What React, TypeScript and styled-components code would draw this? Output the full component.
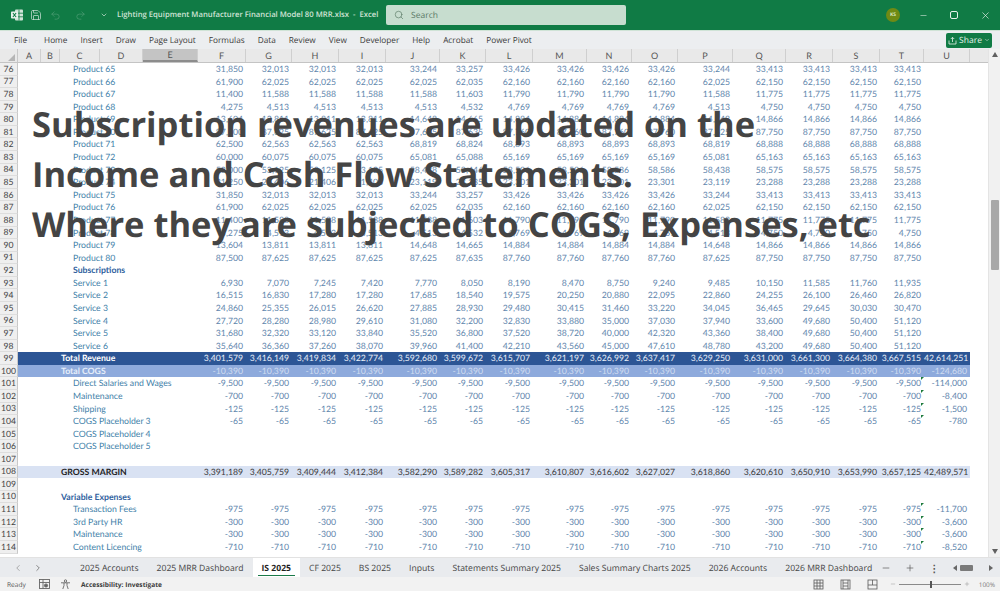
import styled, { createGlobalStyle } from 'styled-components';
import {
  ChevronDown,
  ChevronLeft,
  ChevronRight,
  Minus,
  Plus,
  Redo2,
  Save,
  Search,
  Undo2,
  X,
} from 'lucide-react';

const GlobalStyle = createGlobalStyle`
  html, body {
    margin: 0;
    padding: 0;
    width: 1000px;
    height: 591px;
    overflow: hidden;
    background: #ffffff;
    font-family: "Open Sans", "Liberation Sans", sans-serif;
    text-rendering: geometricPrecision;
  }
`;

const Page = styled.div`
  position: relative;
  display: flex;
  flex-direction: column;
  width: 1000px;
  height: 591px;
  overflow: hidden;
`;

const TitleBar = styled.header`
  display: flex;
  align-items: center;
  height: 30px;
  flex: none;
  padding-left: 10px;
  background: #107b45;
  color: #dfeee5;
`;

const QuickIcon = styled.span<{ $w: number; $faded?: boolean }>`
  display: flex;
  align-items: center;
  flex: none;
  width: ${({ $w }) => $w}px;
  opacity: ${({ $faded }) => ($faded ? 0.3 : 0.95)};
`;

const DocTitle = styled.div`
  width: 269px;
  flex: none;
  font-size: 7.7px;
  font-weight: 600;
  white-space: nowrap;
  color: #cfe3d6;
`;

const SearchBox = styled.div`
  display: flex;
  align-items: center;
  gap: 7px;
  width: 240px;
  height: 20px;
  flex: none;
  padding-left: 8px;
  box-sizing: border-box;
  border-radius: 2px;
  background: #c7ddcf;
  color: #5b7a67;
  font-size: 8.5px;
`;

const WindowControls = styled.div`
  display: flex;
  align-items: center;
  margin-left: auto;
  padding-right: 9.5px;
  gap: 22px;
`;

const Avatar = styled.div`
  display: flex;
  align-items: center;
  justify-content: center;
  width: 14px;
  height: 14px;
  margin-right: -3.5px;
  border-radius: 50%;
  background: #6f8a14;
  color: #d9e6c0;
  font-size: 5px;
  font-weight: 700;
`;

const RestoreIcon = styled.span`
  display: block;
  width: 6px;
  height: 6px;
  border: 1.2px solid #e6f1ea;
  border-radius: 2px;
`;

const MenuBar = styled.nav`
  display: flex;
  align-items: center;
  height: 19px;
  flex: none;
  padding-left: 14px;
  box-sizing: border-box;
  background: #eceef0;
  border-top: 1px solid #cfe3d6;
`;

const MenuItem = styled.span`
  margin-right: 13px;
  font-size: 8.25px;
  color: #3c3c3c;
  white-space: nowrap;
  &:first-child {
    margin-right: 17px;
  }
`;

const ShareButton = styled.div`
  display: flex;
  align-items: center;
  justify-content: center;
  gap: 2px;
  width: 46px;
  height: 15px;
  margin-left: auto;
  margin-right: 8px;
  border-radius: 2px;
  background: #107b45;
  color: #e6f2ea;
  font-size: 8.5px;
`;

const Workspace = styled.div`
  position: relative;
  display: flex;
  flex: 1;
  min-height: 0;
`;

const Sheet = styled.div`
  width: 988px;
  flex: none;
  overflow: hidden;
`;

const HeaderRow = styled.div`
  display: flex;
  height: 14px;
  background: #e9e9e9;
  border-bottom: 1px solid #c4c4c4;
  box-sizing: border-box;
`;

const HeaderCorner = styled.div`
  position: relative;
  width: 18px;
  flex: none;
  border-right: 1px solid #c8c8c8;
  box-sizing: border-box;
  &::after {
    content: '';
    position: absolute;
    right: 2px;
    bottom: 1px;
    border-style: solid;
    border-width: 0 0 7px 7px;
    border-color: transparent transparent #b5b5b5 transparent;
  }
`;

const HeaderCell = styled.div<{ $w: number; $active?: boolean }>`
  display: flex;
  align-items: center;
  justify-content: center;
  width: ${({ $w }) => $w}px;
  flex: none;
  box-sizing: border-box;
  border-right: 1px solid #cfcfcf;
  font-family: Lato, "Open Sans", sans-serif;
  font-size: 9px;
  color: #555555;
  background: ${({ $active }) => ($active ? '#c4c4c4' : 'transparent')};
  border-bottom: ${({ $active }) => ($active ? '2px solid #8c8c8c' : '0')};
`;

const Row = styled.div`
  display: flex;
  height: 12.59px;
`;

const RowNumber = styled.div`
  display: flex;
  align-items: center;
  justify-content: center;
  width: 18px;
  flex: none;
  box-sizing: border-box;
  background: #efefef;
  border-right: 1px solid #c8c8c8;
  border-bottom: 1px solid #dddddd;
  font-family: Lato, "Open Sans", sans-serif;
  font-size: 8.6px;
  color: #444444;
`;

type Variant = 'plain' | 'revenue' | 'cogs' | 'margin';

const bandBackground: Record<Variant, string> = {
  plain: 'transparent',
  revenue: '#2c5595',
  cogs: '#8eaadc',
  margin: '#d9e2f3',
};

const labelColor: Record<Variant, string> = {
  plain: '#3f7fa9',
  revenue: '#ffffff',
  cogs: '#e6eefa',
  margin: '#1f1f1f',
};

const valueColor: Record<Variant, string> = {
  plain: '#5f86ad',
  revenue: '#e8eef8',
  cogs: '#d0dcf0',
  margin: '#3a3a3a',
};

const RowBody = styled.div<{ $variant: Variant }>`
  display: grid;
  grid-template-columns: 180px 48px 46px 47px 47px 54px 46px 47px 54px 45px 46px 55px 53px 47px 47px 44px 46px;
  width: 952px;
  background: ${({ $variant }) => bandBackground[$variant]};
  font-family: Lato, "Open Sans", sans-serif;
  font-size: 8.7px;
  line-height: 12.59px;
`;

const Label = styled.div<{ $indent: number; $tone?: 'strong'; $variant: Variant }>`
  padding-left: ${({ $indent }) => $indent}px;
  white-space: nowrap;
  color: ${({ $tone, $variant }) => ($tone === 'strong' ? '#2f5f9e' : labelColor[$variant])};
  font-weight: ${({ $tone, $variant }) => ($tone === 'strong' || $variant !== 'plain' ? 700 : 400)};
`;

const Value = styled.div<{ $flag?: boolean; $variant: Variant }>`
  position: relative;
  padding-right: 3px;
  text-align: right;
  white-space: nowrap;
  color: ${({ $variant }) => valueColor[$variant]};
  &::after {
    content: '';
    display: ${({ $flag }) => ($flag ? 'block' : 'none')};
    position: absolute;
    top: 0;
    right: 0;
    border-style: solid;
    border-width: 3px 3px 0 0;
    border-color: #1d7a3c transparent transparent transparent;
  }
`;

const Overlay = styled.div`
  position: absolute;
  top: 51px;
  left: 32px;
  font-size: 34.5px;
  font-weight: 700;
  line-height: 50px;
  color: #444444;
  white-space: nowrap;
  pointer-events: none;
`;

const ScrollTrack = styled.div`
  position: relative;
  flex: 1;
  background: #f1f1f1;
  border-left: 1px solid #e4e4e4;
`;

const ScrollArrow = styled.div<{ $down?: boolean }>`
  position: absolute;
  left: 3px;
  ${({ $down }) => ($down ? 'bottom: 3px;' : 'top: 3px;')}
  border-style: solid;
  border-width: ${({ $down }) => ($down ? '5px 3px 0 3px' : '0 3px 5px 3px')};
  border-color: ${({ $down }) =>
    $down ? '#606060 transparent transparent transparent' : 'transparent transparent #606060 transparent'};
`;

const ScrollThumb = styled.div`
  position: absolute;
  top: 151px;
  left: 2px;
  width: 8px;
  height: 70px;
  border-radius: 1px;
  background: #a8a8a8;
`;

const TabBar = styled.div`
  display: flex;
  align-items: center;
  height: 20px;
  flex: none;
  background: #e9ebee;
  color: #454545;
  border-top: 1px solid #e2e2e2;
  box-sizing: border-box;
`;

const TabNav = styled.div`
  display: flex;
  align-items: center;
  flex: none;
  gap: 10px;
  width: 71px;
  padding-left: 13px;
  box-sizing: border-box;
  color: #888888;
`;

const Tab = styled.div<{ $active?: boolean }>`
  position: relative;
  display: flex;
  align-items: center;
  flex: none;
  height: 100%;
  padding: 0 9px;
  font-size: 8.62px;
  white-space: nowrap;
  background: ${({ $active }) => ($active ? '#ffffff' : 'transparent')};
  font-weight: ${({ $active }) => ($active ? 700 : 400)};
  color: ${({ $active }) => ($active ? '#1f1f1f' : '#454545')};
  &::after {
    content: '';
    display: ${({ $active }) => ($active ? 'block' : 'none')};
    position: absolute;
    left: 5px;
    right: 5px;
    bottom: 1px;
    height: 1.5px;
    background: #1a7a48;
  }
`;

const TabTools = styled.div`
  display: flex;
  align-items: center;
  margin-left: auto;
  padding-right: 13px;
  color: #555555;
  gap: 14px;
`;

const TabDots = styled.span`
  font-size: 10px;
  font-weight: 700;
`;

const HScroll = styled.div`
  display: flex;
  align-items: center;
  gap: 3px;
`;

const TriLeft = styled.span`
  border-style: solid;
  border-width: 3px 4px 3px 0;
  border-color: transparent #666666 transparent transparent;
`;

const TriRight = styled.span`
  margin-left: 13px;
  border-style: solid;
  border-width: 3px 0 3px 4px;
  border-color: transparent transparent transparent #666666;
`;

const HThumb = styled.span`
  width: 13px;
  height: 6px;
  border-radius: 1px;
  background: #7a7a7a;
`;

const StatusBar = styled.footer`
  display: flex;
  align-items: center;
  height: 14px;
  flex: none;
  padding-left: 7px;
  background: #f2f2f2;
  color: #555555;
  font-size: 6.6px;
`;

const Ready = styled.span`
  width: 32px;
`;

const StatusIcon = styled.span`
  display: flex;
  width: 21px;
`;

const Accessibility = styled.span`
  font-weight: 700;
  color: #3c3c3c;
  white-space: nowrap;
`;

const ViewGroup = styled.div`
  display: flex;
  align-items: center;
  margin-left: auto;
  gap: 16px;
  padding-right: 12px;
`;

const ZoomSlider = styled.div`
  position: relative;
  width: 62px;
  height: 1px;
  margin: 0 3px;
  background: #8a8a8a;
  &::after {
    content: '';
    position: absolute;
    top: -3px;
    left: 31px;
    width: 2px;
    height: 7px;
    background: #555555;
  }
`;

const ZoomGroup = styled.div`
  display: flex;
  align-items: center;
  color: #777777;
  padding-right: 5px;
`;

const ZoomLabel = styled.span`
  margin-left: 9px;
  font-size: 6.4px;
`;

const columns = [
  ['A', 23], ['B', 19], ['C', 40], ['D', 43], ['E', 55], ['F', 48], ['G', 46], ['H', 47], ['I', 47],
  ['J', 54], ['K', 46], ['L', 47], ['M', 54], ['N', 45], ['O', 46], ['P', 55], ['Q', 53], ['R', 47],
  ['S', 47], ['T', 44], ['U', 46],
] as const;

const menuItems = ['File', 'Home', 'Insert', 'Draw', 'Page Layout', 'Formulas', 'Data', 'Review', 'View', 'Developer', 'Help', 'Acrobat', 'Power Pivot'];
const tabs = ['2025 Accounts', '2025 MRR Dashboard', 'IS 2025', 'CF 2025', 'BS 2025', 'Inputs', 'Statements Summary 2025', 'Sales Summary Charts 2025', '2026 Accounts', '2026 MRR Dashboard'];

type RowData = {
  label?: string;
  indent?: number;
  tone?: 'strong';
  variant?: Variant;
  values?: string;
  flag?: boolean;
};

const repeat = (v: string, total: string) => `${Array(15).fill(v).join(' ')} ${total}`;

const p65 = '31,850 32,013 32,013 32,013 33,244 33,257 33,426 33,426 33,426 33,426 33,244 33,413 33,413 33,413 33,413';
const p66 = '61,900 62,025 62,025 62,025 62,025 62,035 62,160 62,160 62,160 62,160 62,025 62,150 62,150 62,150 62,150';
const p67 = '11,400 11,588 11,588 11,588 11,588 11,603 11,790 11,790 11,790 11,790 11,588 11,775 11,775 11,775 11,775';
const p68 = '4,275 4,513 4,513 4,513 4,513 4,532 4,769 4,769 4,769 4,769 4,513 4,750 4,750 4,750 4,750';
const p69 = '13,604 13,811 13,811 13,811 14,648 14,665 14,884 14,884 14,884 14,884 14,648 14,866 14,866 14,866 14,866';
const p70 = '87,500 87,625 87,625 87,625 87,625 87,635 87,760 87,760 87,760 87,760 87,625 87,750 87,750 87,750 87,750';

const rows: RowData[] = [
  { label: 'Product 65', indent: 55, values: p65 },
  { label: 'Product 66', indent: 55, values: p66 },
  { label: 'Product 67', indent: 55, values: p67 },
  { label: 'Product 68', indent: 55, values: p68 },
  { label: 'Product 69', indent: 55, values: p69 },
  { label: 'Product 70', indent: 55, values: p70 },
  { label: 'Product 71', indent: 55, values: '62,500 62,563 62,563 62,563 68,819 68,824 68,893 68,893 68,893 68,893 68,819 68,888 68,888 68,888 68,888' },
  { label: 'Product 72', indent: 55, values: '60,000 60,075 60,075 60,075 65,081 65,088 65,169 65,169 65,169 65,169 65,081 65,163 65,163 65,163 65,163' },
  { label: 'Product 73', indent: 55, values: '53,000 53,125 53,125 53,125 58,438 58,446 58,586 58,586 58,586 58,586 58,438 58,575 58,575 58,575 58,575' },
  { label: 'Product 74', indent: 55, values: '21,250 21,406 21,406 21,406 23,119 23,135 23,301 23,301 23,301 23,301 23,119 23,288 23,288 23,288 23,288' },
  { label: 'Product 75', indent: 55, values: p65 },
  { label: 'Product 76', indent: 55, values: p66 },
  { label: 'Product 77', indent: 55, values: p67 },
  { label: 'Product 78', indent: 55, values: p68 },
  { label: 'Product 79', indent: 55, values: p69 },
  { label: 'Product 80', indent: 55, values: p70 },
  { label: 'Subscriptions', indent: 55, tone: 'strong' },
  { label: 'Service 1', indent: 55, values: '6,930 7,070 7,245 7,420 7,770 8,050 8,190 8,470 8,750 9,240 9,485 10,150 11,585 11,760 11,935' },
  { label: 'Service 2', indent: 55, values: '16,515 16,830 17,280 17,280 17,685 18,540 19,575 20,250 20,880 22,095 22,860 24,255 26,100 26,460 26,820' },
  { label: 'Service 3', indent: 55, values: '24,860 25,355 26,015 26,620 27,885 28,930 29,480 30,415 31,460 33,220 34,045 36,465 29,645 30,030 30,470' },
  { label: 'Service 4', indent: 55, values: '27,720 28,280 28,980 29,610 31,080 32,200 32,830 33,880 35,000 37,030 37,940 33,600 49,680 50,400 51,120' },
  { label: 'Service 5', indent: 55, values: '31,680 32,320 33,120 33,840 35,520 36,800 37,520 38,720 40,000 42,320 43,360 38,400 49,680 50,400 51,120' },
  { label: 'Service 6', indent: 55, values: '35,640 36,360 37,260 38,070 39,960 41,400 42,210 43,560 45,000 47,610 48,780 43,200 49,680 50,400 51,120' },
  { label: 'Total Revenue', indent: 43, variant: 'revenue', values: '3,401,579 3,416,149 3,419,834 3,422,774 3,592,680 3,599,672 3,615,707 3,621,197 3,626,992 3,637,417 3,629,250 3,631,000 3,661,300 3,664,380 3,667,515 42,614,251' },
  { label: 'Total COGS', indent: 43, variant: 'cogs', values: repeat('-10,390', '-124,680') },
  { label: 'Direct Salaries and Wages', indent: 55, values: repeat('-9,500', '-114,000'), flag: true },
  { label: 'Maintenance', indent: 55, values: repeat('-700', '-8,400'), flag: true },
  { label: 'Shipping', indent: 55, values: repeat('-125', '-1,500'), flag: true },
  { label: 'COGS Placeholder 3', indent: 55, values: repeat('-65', '-780'), flag: true },
  { label: 'COGS Placeholder 4', indent: 55 },
  { label: 'COGS Placeholder 5', indent: 55 },
  {},
  { label: 'GROSS MARGIN', indent: 43, variant: 'margin', values: '3,391,189 3,405,759 3,409,444 3,412,384 3,582,290 3,589,282 3,605,317 3,610,807 3,616,602 3,627,027 3,618,860 3,620,610 3,650,910 3,653,990 3,657,125 42,489,571' },
  {},
  { label: 'Variable Expenses', indent: 43, tone: 'strong' },
  { label: 'Transaction Fees', indent: 55, values: repeat('-975', '-11,700'), flag: true },
  { label: '3rd Party HR', indent: 55, values: repeat('-300', '-3,600'), flag: true },
  { label: 'Maintenance', indent: 55, values: repeat('-300', '-3,600'), flag: true },
  { label: 'Content Licencing', indent: 55, values: repeat('-710', '-8,520'), flag: true },
];

function ExcelLogo() {
  return (
    <svg width="14" height="14" viewBox="0 0 14 14">
      <rect x="5" y="1.5" width="8" height="11" rx="1" fill="#dcebe2" />
      <path d="M9 1.5v11M5 5.2h8M5 8.8h8" stroke="#107b45" strokeWidth="0.8" />
      <rect x="1" y="3.5" width="7" height="7" rx="0.8" fill="#f3f8f5" />
      <path d="M2.9 5l3.2 4M6.1 5L2.9 9" stroke="#107b45" strokeWidth="1.1" />
    </svg>
  );
}

function AccessibilityIcon() {
  return (
    <svg width="11" height="11" viewBox="0 0 11 11" fill="none" stroke="#555" strokeWidth="0.8">
      <circle cx="5.5" cy="2" r="1.2" />
      <path d="M1 3.8h9M4 4v2.5L2.8 10M7 4v2.5L8.2 10" />
    </svg>
  );
}

function MacroIcon() {
  return (
    <svg width="11" height="10" viewBox="0 0 11 10" fill="none" stroke="#666" strokeWidth="0.9">
      <rect x="0.5" y="0.5" width="10" height="9" />
      <path d="M0.5 3.5h10M4 0.5v9" />
      <circle cx="7" cy="6.5" r="1.6" fill="#666" />
    </svg>
  );
}

function ViewIcon({ kind }: { kind: 'normal' | 'layout' | 'break' }) {
  const lines = {
    normal: 'M1 4h9M1 7h9M4 1v9M7 1v9',
    layout: 'M3 1v9M8 1v9M3 4h5M3 7h5',
    break: 'M1 6h9M5.5 1v5',
  }[kind];
  return (
    <svg width="11" height="11" viewBox="0 0 11 11" fill="none" stroke="#5a5a5a" strokeWidth="0.8">
      <rect x="1" y="1" width="9" height="9" />
      <path d={lines} />
    </svg>
  );
}

export default function App() {
  return (
    <Page>
      <GlobalStyle />
      <TitleBar>
        <QuickIcon $w={20}><ExcelLogo /></QuickIcon>
        <QuickIcon $w={20}><Save size={12} strokeWidth={1.4} /></QuickIcon>
        <QuickIcon $w={25} $faded><Undo2 size={11} strokeWidth={1.5} /></QuickIcon>
        <QuickIcon $w={25} $faded><Redo2 size={11} strokeWidth={1.5} /></QuickIcon>
        <QuickIcon $w={17}><ChevronDown size={8} strokeWidth={2} /></QuickIcon>
        <DocTitle>{'Lighting Equipment Manufacturer Financial Model 80 MRR.xlsx\u00a0\u00a0-\u00a0\u00a0Excel'}</DocTitle>
        <SearchBox>
          <Search size={10} strokeWidth={1.6} />
          Search
        </SearchBox>
        <WindowControls>
          <Avatar>KS</Avatar>
          <Minus size={9} strokeWidth={1.5} />
          <RestoreIcon />
          <X size={11} strokeWidth={1.5} />
        </WindowControls>
      </TitleBar>

      <MenuBar>
        {menuItems.map((item) => (
          <MenuItem key={item}>{item}</MenuItem>
        ))}
        <ShareButton>
          <svg width="9" height="9" viewBox="0 0 9 9" fill="none" stroke="#e6f2ea" strokeWidth="0.8">
            <path d="M1 4.5V8h7V4.5M4.5 6V1.5M2.8 3l1.7-1.7L6.2 3" />
          </svg>
          Share
          <ChevronDown size={6} strokeWidth={2} />
        </ShareButton>
      </MenuBar>

      <Workspace>
        <Sheet>
          <HeaderRow>
            <HeaderCorner />
            {columns.map(([name, width]) => (
              <HeaderCell key={name} $w={width} $active={name === 'E'}>{name}</HeaderCell>
            ))}
          </HeaderRow>
          {rows.map((row, i) => {
            const values = row.values ? row.values.split(' ') : [];
            const variant = row.variant ?? 'plain';
            return (
              <Row key={i}>
                <RowNumber>{76 + i}</RowNumber>
                <RowBody $variant={variant}>
                  <Label $indent={row.indent ?? 0} $tone={row.tone} $variant={variant}>{row.label}</Label>
                  {values.map((v, j) => (
                    <Value key={j} $variant={variant} $flag={row.flag && j === 14}>{v}</Value>
                  ))}
                </RowBody>
              </Row>
            );
          })}
        </Sheet>
        <ScrollTrack>
          <ScrollArrow />
          <ScrollThumb />
          <ScrollArrow $down />
        </ScrollTrack>
        <Overlay>
          Subscription revenues are updated on the
          <br />
          Income and Cash Flow Statements.
          <br />
          Where they are subjected to COGS, Expenses, etc
        </Overlay>
      </Workspace>

      <TabBar>
        <TabNav>
          <ChevronLeft size={10} strokeWidth={1.6} />
          <ChevronRight size={10} strokeWidth={1.6} color="#555" />
        </TabNav>
        {tabs.map((tab) => (
          <Tab key={tab} $active={tab === 'IS 2025'}>{tab}</Tab>
        ))}
        <TabTools>
          <Minus size={10} strokeWidth={1.6} />
          <Plus size={10} strokeWidth={1.6} />
          <TabDots>⋮</TabDots>
          <HScroll>
            <TriLeft />
            <HThumb />
            <TriRight />
          </HScroll>
        </TabTools>
      </TabBar>

      <StatusBar>
        <Ready>Ready</Ready>
        <StatusIcon><MacroIcon /></StatusIcon>
        <StatusIcon><AccessibilityIcon /></StatusIcon>
        <Accessibility>Accessibility: Investigate</Accessibility>
        <ViewGroup>
          <ViewIcon kind="normal" />
          <ViewIcon kind="layout" />
          <ViewIcon kind="break" />
        </ViewGroup>
        <ZoomGroup>
          <Minus size={6} strokeWidth={1.4} />
          <ZoomSlider />
          <Plus size={6} strokeWidth={1.4} />
          <ZoomLabel>100%</ZoomLabel>
        </ZoomGroup>
      </StatusBar>
    </Page>
  );
}
